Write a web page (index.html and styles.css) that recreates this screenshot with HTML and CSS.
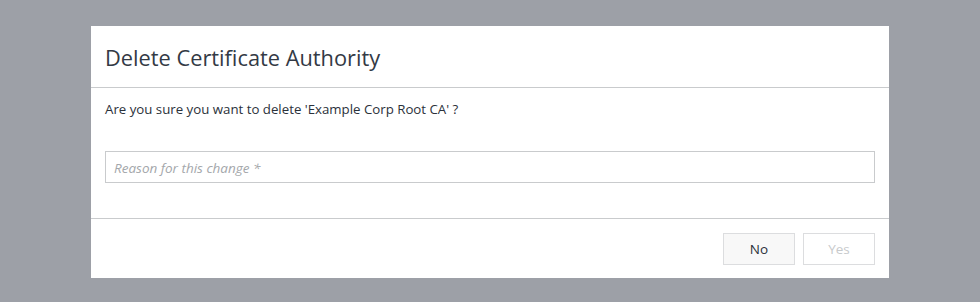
FILE: index.html
```html
<!DOCTYPE html>
<html>
<head>
<meta charset="utf-8">
<link rel="stylesheet" href="styles.css">
</head>
<body>
<div class="overlay">
  <div class="modal">
    <div class="modal-header">
      <h1 class="modal-title">Delete Certificate Authority</h1>
    </div>
    <div class="modal-body">
      <p class="message">Are you sure you want to delete 'Example Corp Root CA' ?</p>
      <input class="reason" type="text" placeholder="Reason for this change *">
    </div>
    <div class="modal-footer">
      <button class="btn btn-no">No</button>
      <button class="btn btn-yes" disabled>Yes</button>
    </div>
  </div>
</div>
</body>
</html>
```
FILE: styles.css
```css
html, body {
  margin: 0;
  padding: 0;
  height: 100%;
}
body {
  background: #9da0a7;
  font-family: "Open Sans", "Noto Sans", sans-serif;
}
.overlay {
  padding-top: 26px;
  display: flex;
  justify-content: center;
}
.modal {
  width: 798px;
  background: #fff;
}
.modal-header {
  height: 61px;
  border-bottom: 1px solid #c9cbcd;
  padding: 0 14px;
  display: flex;
  align-items: center;
}
.modal-title {
  margin: 0;
  font-size: 21.8px;
  font-weight: 400;
  color: #333a45;
  letter-spacing: 0;
  padding-top: 2px;
}
.modal-body {
  padding: 12px 14px 35px;
  border-bottom: 1px solid #c9cbcd;
}
.message {
  margin: 0;
  font-size: 13.25px;
  line-height: 18px;
  color: #2b313a;
}
.reason {
  display: block;
  box-sizing: border-box;
  width: 770px;
  height: 32px;
  margin-top: 33px;
  border: 1px solid #c9cbcd;
  padding: 2px 8px 0;
  font-family: "Open Sans", "Noto Sans", sans-serif;
  font-size: 13.5px;
  outline: none;
}
.reason::placeholder {
  color: #a4a7ab;
  font-style: italic;
}
.modal-footer {
  display: flex;
  justify-content: flex-end;
  gap: 8px;
  padding: 14px 14px 13px;
}
.btn {
  width: 72px;
  height: 32px;
  font-family: "Open Sans", "Noto Sans", sans-serif;
  font-size: 13.5px;
  border: 1px solid #dcdddf;
  padding: 0;
}
.btn-no {
  background: #f8f8f8;
  color: #2b313a;
}
.btn-yes {
  background: #fff;
  color: #c8cacc;
}
```
